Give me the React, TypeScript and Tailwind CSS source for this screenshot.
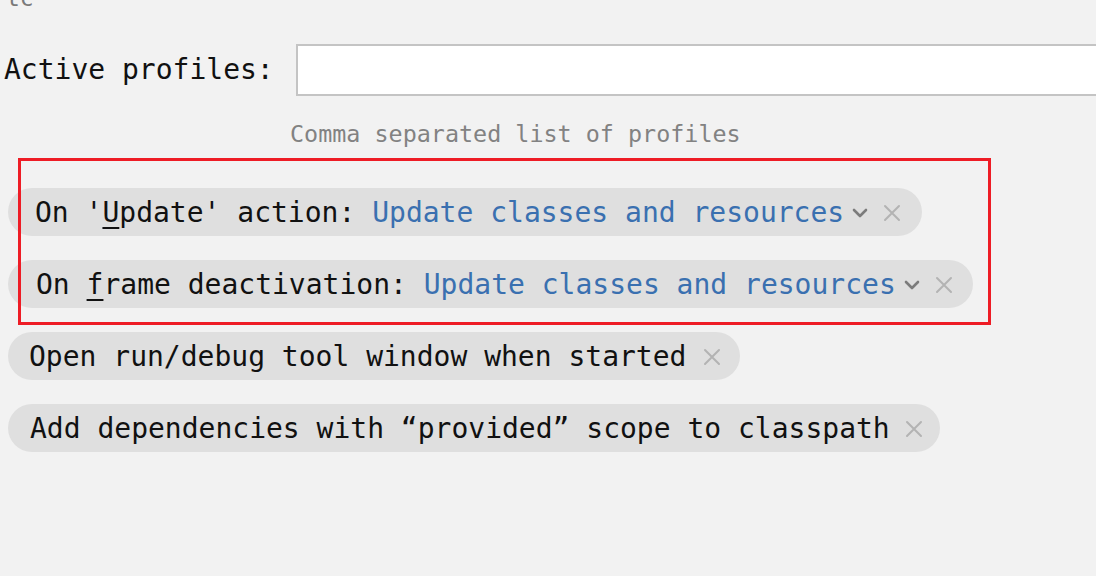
import React from "react";

const Chevron = () => (
  <svg width="18" height="12" viewBox="0 0 18 12" className="shrink-0">
    <path d="M3 3 L9 9 L15 3" fill="none" stroke="#7c7c7c" strokeWidth="2.6" strokeLinecap="round" strokeLinejoin="round" />
  </svg>
);

const Close = () => (
  <svg width="18" height="18" viewBox="0 0 18 18" className="shrink-0">
    <path d="M2 2 L16 16 M16 2 L2 16" fill="none" stroke="#b3b3b3" strokeWidth="2" strokeLinecap="round" />
  </svg>
);

export default function App() {
  return (
    <div
      className="relative w-[1096px] h-[576px] overflow-hidden bg-[#f2f2f2] text-[#111111]"
      style={{ fontFamily: '"DejaVu Sans Mono", "Liberation Mono", monospace' }}
    >
      <div className="h-[8px] overflow-hidden pl-[6px]">
        <div className="mt-[-16px] text-[23px] leading-[28px] text-[#7a7a7a]">tc</div>
      </div>

      <div className="mt-[36px] flex items-center">
        <div className="shrink-0 pl-[4px] w-[296px] text-[28px] leading-[34px]">Active profiles:</div>
        <div className="h-[52px] w-[820px] shrink-0 border-2 border-[#c4c4c4] bg-white" />
      </div>

      <div className="mt-[24px] pl-[290px] text-[23.4px] leading-[28px] text-[#828282]">
        Comma separated list of profiles
      </div>

      <div className="mt-[40px] flex flex-col items-start gap-[24px] pl-[8px]">
        <div className="flex h-[48px] items-center rounded-full bg-[#dfdfdf] pl-[27px] pr-[21px] pt-[1px] text-[28px]">
          <span className="whitespace-pre">
            On '<u className="underline underline-offset-[5px] decoration-2">U</u>pdate' action:{" "}
          </span>
          <span className="whitespace-pre text-[#3a70b0]">Update classes and resources</span>
          <span className="ml-[7px]"><Chevron /></span>
          <span className="ml-[14px]"><Close /></span>
        </div>

        <div className="flex h-[48px] items-center rounded-full bg-[#dfdfdf] pl-[28px] pr-[20px] pt-[1px] text-[28px]">
          <span className="whitespace-pre">
            On <u className="underline underline-offset-[5px] decoration-2">f</u>rame deactivation:{" "}
          </span>
          <span className="whitespace-pre text-[#3a70b0]">Update classes and resources</span>
          <span className="ml-[7px]"><Chevron /></span>
          <span className="ml-[14px]"><Close /></span>
        </div>

        <div className="flex h-[48px] items-center rounded-full bg-[#dfdfdf] pl-[21px] pr-[19px] pt-[1px] text-[28px]">
          <span className="whitespace-pre">Open run/debug tool window when started</span>
          <span className="ml-[17px]"><Close /></span>
        </div>

        <div className="flex h-[48px] items-center rounded-full bg-[#dfdfdf] pl-[22px] pr-[17px] pt-[1px] text-[28px]">
          <span className="whitespace-pre">Add dependencies with “provided” scope to classpath</span>
          <span className="ml-[15px]"><Close /></span>
        </div>
      </div>

      <div className="absolute left-[18px] top-[158px] h-[167px] w-[973px] border-[3px] border-[#ee1c25]" />
    </div>
  );
}
